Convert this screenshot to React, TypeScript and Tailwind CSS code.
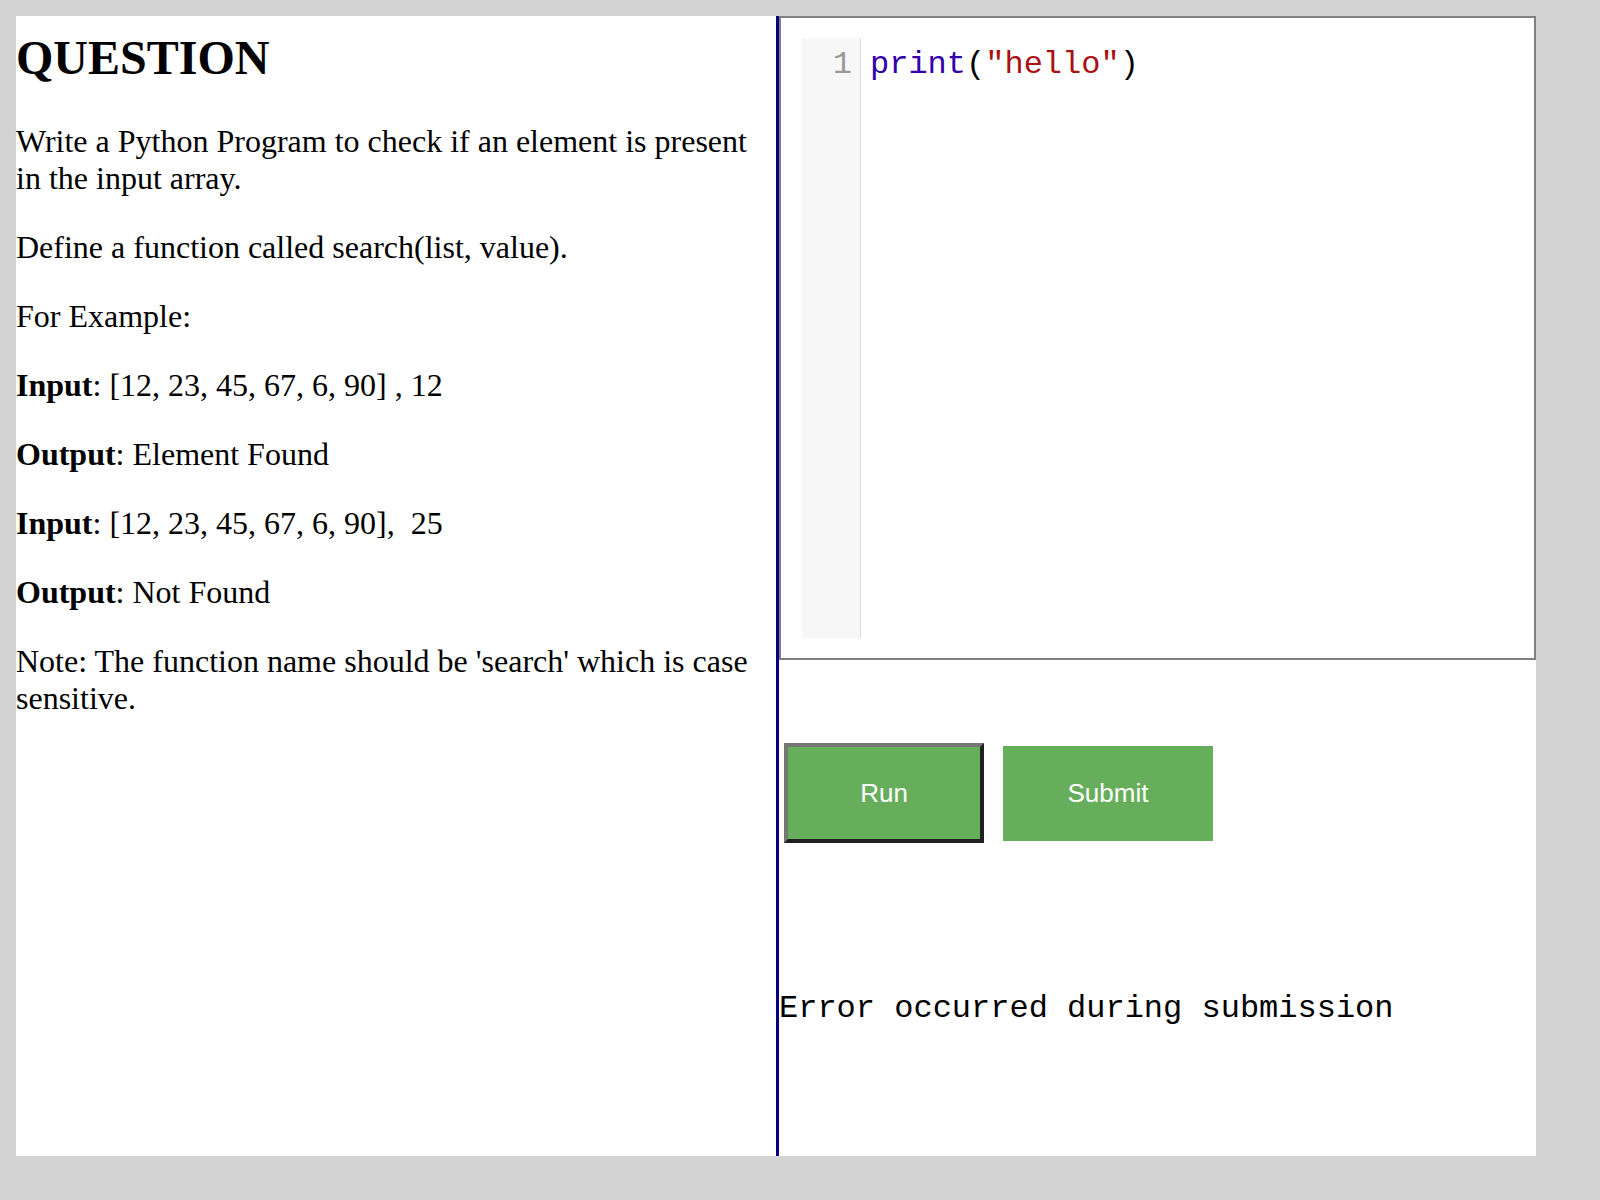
import React from "react";

export default function App() {
  const serif = { fontFamily: '"Liberation Serif", "Times New Roman", serif' };
  const mono = { fontFamily: '"Liberation Mono", "Courier New", monospace' };
  const sans = { fontFamily: '"Liberation Sans", Arial, sans-serif' };
  return (
    <div className="min-h-[1200px] w-full bg-[#d3d3d3] p-4">
      <div className="flex h-[1140px] w-[1520px] bg-white">
        <div className="w-[760px] shrink-0 text-black" style={serif}>
          <h1 className="mt-[14px] mb-[38px] text-[48px] font-bold leading-[55px]">QUESTION</h1>
          <p className="mb-8 text-[32px] leading-[normal]">
            Write a Python Program to check if an element is present in the input array.
          </p>
          <p className="mb-8 text-[32px] leading-[normal]">Define a function called search(list, value).</p>
          <p className="mb-8 text-[32px] leading-[normal]">For Example:</p>
          <p className="mb-8 text-[32px] leading-[normal]">
            <b>Input</b>: [12, 23, 45, 67, 6, 90] , 12
          </p>
          <p className="mb-8 text-[32px] leading-[normal]">
            <b>Output</b>: Element Found
          </p>
          <p className="mb-8 text-[32px] leading-[normal]">
            <b>Input</b>: [12, 23, 45, 67, 6, 90],{"\u00a0"} 25
          </p>
          <p className="mb-8 text-[32px] leading-[normal]">
            <b>Output</b>: Not Found
          </p>
          <p className="mb-8 text-[32px] leading-[normal]">
            Note: The function name should be 'search' which is case sensitive.
          </p>
        </div>
        <div className="w-[3px] shrink-0 bg-[#000080]" />
        <div className="flex min-w-0 flex-1 flex-col">
          <div className="h-[644px] border-2 border-[#808080] bg-white pt-[20px] pb-[20px] pl-[21px]">
            <div className="flex h-[600px]" style={mono}>
              <div className="w-[59px] shrink-0 border-r border-[#dddddd] bg-[#f7f7f7] pt-[9px] pr-[8px] text-right text-[32px] leading-[36px] text-[#999999]">
                1
              </div>
              <div className="flex-1 pt-[9px] pl-[9px] text-[32px] leading-[36px] text-black">
                <span className="text-[#3300aa]">print</span>(<span className="text-[#aa1111]">"hello"</span>)
              </div>
            </div>
          </div>
          <div className="mt-[83px] ml-[5px] flex items-center gap-[19px]" style={sans}>
            <button className="h-[100px] w-[200px] border-4 border-t-[#767676] border-l-[#767676] border-r-[#212121] border-b-[#212121] bg-[#67ae5c] text-[26px] text-white">
              Run
            </button>
            <button className="h-[95px] w-[210px] bg-[#67ae5c] text-[26px] text-white">Submit</button>
          </div>
          <pre className="mt-[147px] text-[32px] leading-[normal] text-black" style={mono}>
            Error occurred during submission
          </pre>
        </div>
      </div>
    </div>
  );
}
